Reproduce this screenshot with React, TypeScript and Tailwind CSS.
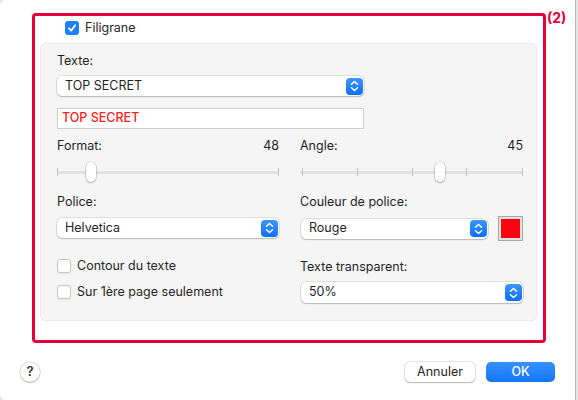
import React from 'react';

const Stepper = () => (
    <div className="w-[17px] h-[17px] rounded-[4px] bg-gradient-to-b from-[#3d95ff] to-[#0a6ef5] flex items-center justify-center">
        <svg width="9" height="12" viewBox="0 0 9 12" fill="none" stroke="white" strokeWidth="1.5" strokeLinecap="round" strokeLinejoin="round">
            <path d="M1.5 4.2 L4.5 1.5 L7.5 4.2" />
            <path d="M1.5 7.8 L4.5 10.5 L7.5 7.8" />
        </svg>
    </div>
);

const Select = ({ value, className }: { value: string; className: string }) => (
    <div className={`flex items-center justify-between bg-white rounded-[5px] pl-[8px] pr-[1px] shadow-[0_0_0_0.5px_rgba(0,0,0,0.18),0_1px_1.5px_rgba(0,0,0,0.18)] ${className}`}>
        <span className="text-[12.5px] text-[#1f1f1f]">{value}</span>
        <Stepper />
    </div>
);

const Checkbox = ({ checked, label }: { checked?: boolean; label: string }) => (
    <div className="flex items-center gap-[6px] h-[16px]">
        {checked ? (
            <div className="w-[14px] h-[14px] rounded-[3px] bg-[#1b7ff6] flex items-center justify-center">
                <svg width="10" height="10" viewBox="0 0 10 10" fill="none" stroke="white" strokeWidth="1.8" strokeLinecap="round" strokeLinejoin="round">
                    <path d="M2 5.3 L4.2 7.6 L8.2 2.3" />
                </svg>
            </div>
        ) : (
            <div className="w-[14px] h-[14px] rounded-[3px] bg-white border border-[#c8c8c8] shadow-[0_0.5px_1px_rgba(0,0,0,0.08)]" />
        )}
        <span className="text-[12.5px] text-[#262626]">{label}</span>
    </div>
);

const Slider = ({ ticks, thumb }: { ticks: number[]; thumb: number }) => (
    <div className="relative h-[24px] mt-[6px]">
        <div className="absolute left-0 right-0 top-[11px] h-[3px] rounded-full bg-[#e1e1e1]" />
        {ticks.map((t) => (
            <div key={t} className="absolute top-[8px] w-[1px] h-[8px] bg-[#c4c4c4]" style={{ left: `${t}px` }} />
        ))}
        <div className="absolute top-[2px] w-[10px] h-[20px] rounded-full bg-white shadow-[0_0_0_0.5px_rgba(0,0,0,0.2),0_1px_2px_rgba(0,0,0,0.2)]" style={{ left: `${thumb - 5}px` }} />
    </div>
);

const Label = ({ text, value }: { text: string; value?: string }) => (
    <div className="flex justify-between h-[16px] items-center text-[12.5px] text-[#1f1f1f]">
        <span>{text}</span>
        {value && <span>{value}</span>}
    </div>
);

export default function App() {
    return (
        <div className="w-[578px] h-[400px] bg-[#e4e4e4] flex" style={{ fontFamily: 'Inter, "Liberation Sans", sans-serif' }}>
            <div className="relative w-[576px] h-[400px] bg-white rounded-tl-[6px] rounded-bl-[6px] border-r border-[#b8b8b8] flex flex-col">
                <span className="absolute left-[547px] top-[7px] text-[14px] font-bold text-[#e4003b]">(2)</span>

                <div className="ml-[32px] mt-[13px] w-[514px] h-[330px] border-[3px] border-[#e4003b] rounded-[4px] pl-[5px] pr-[6px] pt-[4px]">
                    <div className="pl-[25px]">
                        <Checkbox checked label="Filigrane" />
                    </div>

                    <div className="mt-[7px] h-[278px] bg-[#f5f5f5] border border-[#ebebeb] rounded-[5px] pl-[16px] pr-[13px] pt-[9px]">
                        <Label text="Texte:" />
                        <Select value="TOP SECRET" className="mt-[7px] w-[307px] h-[20px]" />
                        <div className="mt-[12px] w-[307px] h-[21px] bg-white border border-[#cdcdcd] pl-[4px] flex items-center text-[12.5px] font-medium text-[#ff2222]">
                            TOP SECRET
                        </div>

                        <div className="grid grid-cols-[222px_223px] gap-x-[21px] mt-[9px]">
                            <div className="flex flex-col">
                                <Label text="Format:" value="48" />
                                <Slider ticks={[0, 221]} thumb={34} />
                                <div className="mt-[10px]">
                                    <Label text="Police:" />
                                </div>
                                <Select value="Helvetica" className="mt-[8px] w-[222px] h-[20px]" />
                                <div className="mt-[20px] flex flex-col gap-[10px]">
                                    <Checkbox label="Contour du texte" />
                                    <Checkbox label="Sur 1ère page seulement" />
                                </div>
                            </div>

                            <div className="flex flex-col">
                                <Label text="Angle:" value="45" />
                                <Slider ticks={[2, 57, 112, 166, 222]} thumb={140} />
                                <div className="mt-[10px]">
                                    <Label text="Couleur de police:" />
                                </div>
                                <div className="mt-[6px] flex items-center gap-[10px]">
                                    <Select value="Rouge" className="ml-[1px] w-[188px] h-[20px]" />
                                    <div className="w-[25px] h-[25px] border border-[#a8a8a8] bg-[#e2e2e2] p-[2px]">
                                        <div className="w-full h-full bg-[#ff0010]" />
                                    </div>
                                </div>
                                <div className="mt-[18px]">
                                    <Label text="Texte transparent:" />
                                </div>
                                <Select value="50%" className="mt-[7px] ml-[1px] w-[222px] h-[21px]" />
                            </div>
                        </div>
                    </div>
                </div>

                <div className="mt-[19px] flex items-center pl-[20px] pr-[20px]">
                    <div className="w-[20px] h-[20px] rounded-full bg-white shadow-[0_0_0_0.5px_rgba(0,0,0,0.2),0_1px_2px_rgba(0,0,0,0.2)] flex items-center justify-center text-[13px] font-semibold text-[#333]">
                        ?
                    </div>
                    <div className="ml-auto flex gap-[11px]">
                        <button className="w-[70px] h-[20px] rounded-[5px] bg-white shadow-[0_0_0_0.5px_rgba(0,0,0,0.2),0_1px_1.5px_rgba(0,0,0,0.2)] text-[12.5px] text-[#262626]">
                            Annuler
                        </button>
                        <button className="w-[69px] h-[20px] rounded-[5px] bg-gradient-to-b from-[#3590ff] to-[#1177f7] text-[12.5px] font-medium text-white">
                            OK
                        </button>
                    </div>
                </div>
            </div>
        </div>
    );
}
